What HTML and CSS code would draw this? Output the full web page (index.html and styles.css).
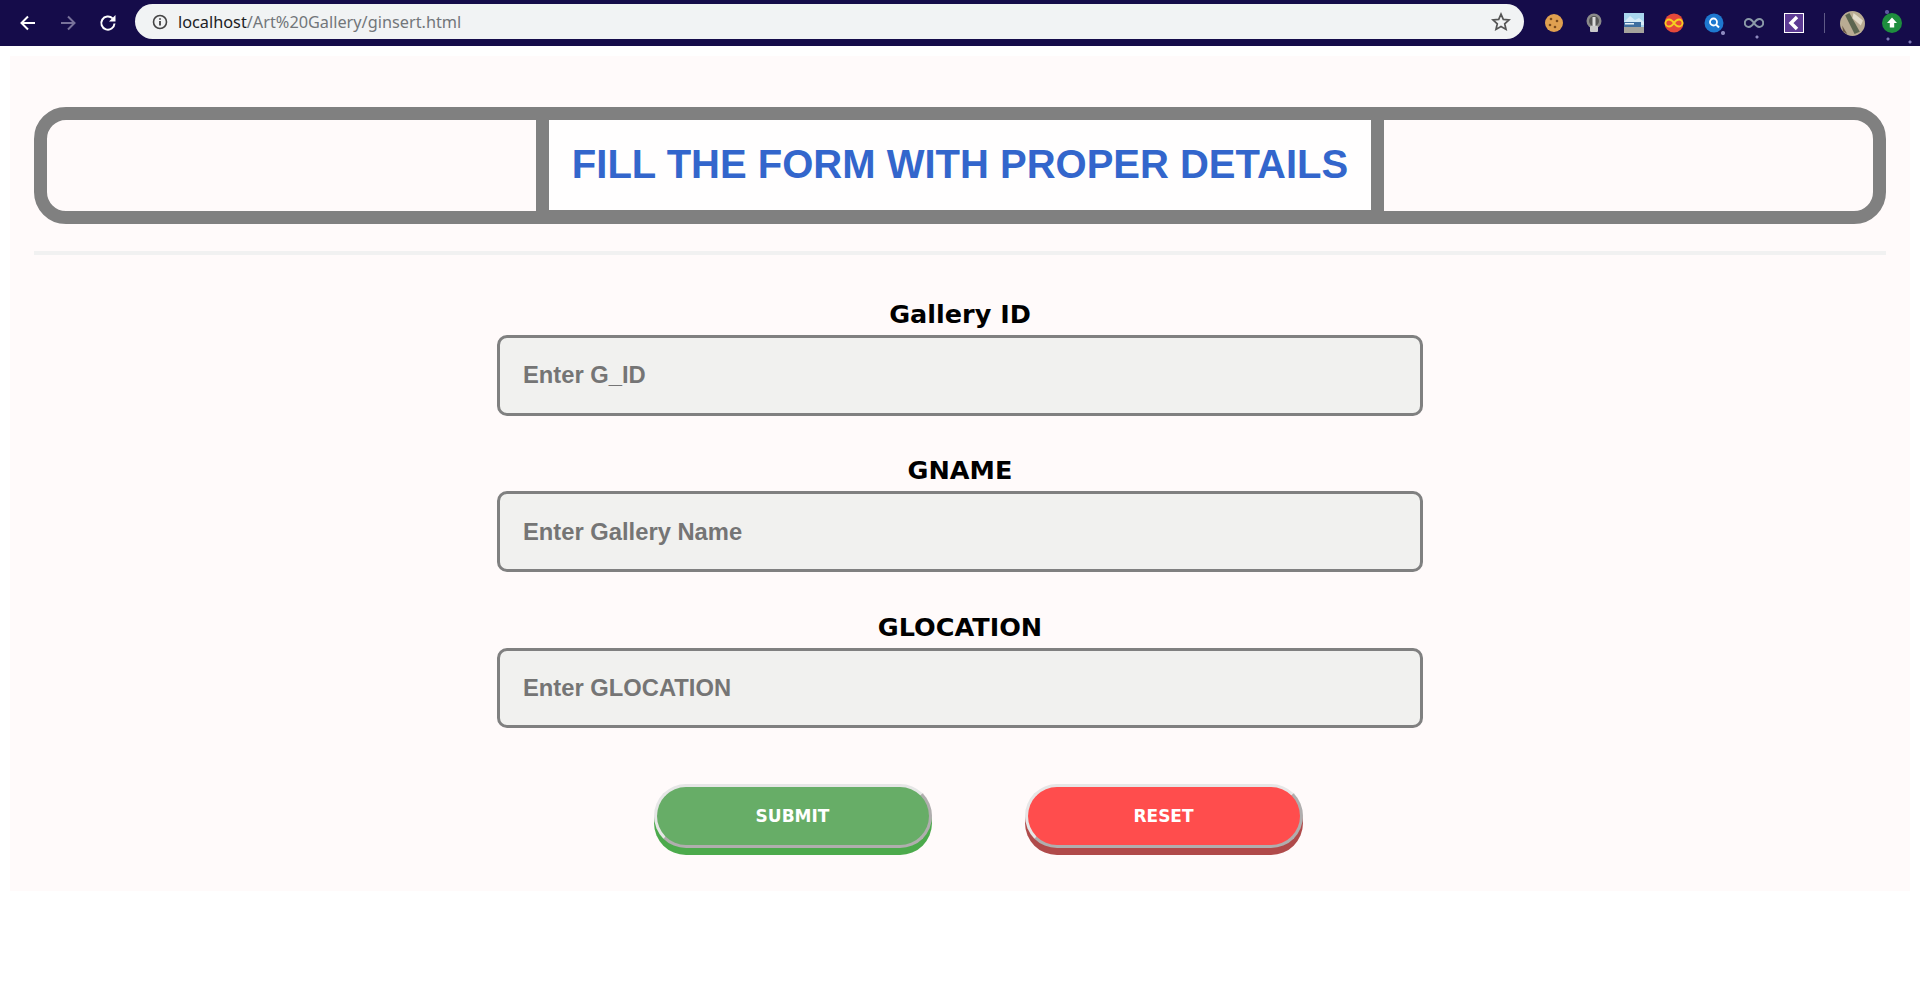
FILE: index.html
```html
<!DOCTYPE html>
<html lang="en">
<head>
    <meta charset="UTF-8">
    <meta name="viewport" content="width=device-width, initial-scale=1.0">
    <title>Art Gallery</title>
    <link rel="stylesheet" href="styles.css">
</head>
<body>
    <header class="toolbar">
        <nav class="nav-buttons">
            <svg class="nav-icon" viewBox="0 0 20 20"><path d="M17 10H4M10 3.500 3.500 10l6.500 6.500" fill="none" stroke="#fff" stroke-width="2"/></svg>
            <svg class="nav-icon" viewBox="0 0 20 20"><path d="M3 10h13M10 3.500l6.500 6.500-6.500 6.500" fill="none" stroke="#78729a" stroke-width="2"/></svg>
            <svg class="nav-icon" viewBox="0 0 20 20"><path d="M16.500 10.500a6.600 6.600 0 1 1-1.900-5.100" fill="none" stroke="#fff" stroke-width="2"/><path d="M17.500 2v6.500H11z" fill="#fff"/></svg>
        </nav>
        <div class="address-bar">
            <svg class="info-icon" viewBox="0 0 16 16"><circle cx="8" cy="8" r="6.500" fill="none" stroke="#444" stroke-width="1.600"/><path d="M8 7v4.500M8 4.200v1.600" stroke="#444" stroke-width="1.800"/></svg>
            <span class="url"><span class="url-host">localhost</span>/Art%20Gallery/ginsert.html</span>
            <svg class="star-icon" viewBox="0 0 20 20"><path d="M10 2.200l2.300 5.200 5.700.6-4.300 3.800 1.300 5.600L10 14.500l-5 2.900 1.300-5.600L2 8l5.700-.6z" fill="none" stroke="#555" stroke-width="1.700"/></svg>
        </div>
        <div class="extensions">
            <svg class="ext" viewBox="0 0 20 20"><circle cx="10" cy="10" r="9" fill="#e0a050"/><circle cx="7" cy="6" r="1.300" fill="#7a4a1c"/><circle cx="13" cy="8" r="1.300" fill="#7a4a1c"/><circle cx="6" cy="12" r="1.300" fill="#7a4a1c"/><circle cx="11" cy="14" r="1.300" fill="#7a4a1c"/></svg>
            <svg class="ext" viewBox="0 0 20 20"><circle cx="10" cy="8" r="7.500" fill="#8a8a8a"/><circle cx="10" cy="8" r="5" fill="#555"/><rect x="8.500" y="4" width="3" height="9" fill="#ddd"/><rect x="6" y="13" width="8" height="6" rx="1" fill="#c9c9c9"/></svg>
            <svg class="ext" viewBox="0 0 20 20"><rect width="20" height="20" fill="#a9d6ee"/><path d="M0 9l6-6 5 4 4-2 5 4v3H0z" fill="#d7ebf6"/><rect y="9" width="17" height="5" fill="#3f6f9f"/><rect x="1" y="10" width="9" height="1.500" fill="#e8f2f8"/><rect y="14" width="20" height="6" fill="#a5a39c"/></svg>
            <svg class="ext" viewBox="0 0 20 20"><circle cx="10" cy="10" r="9.500" fill="#e5493a"/><path d="M10 10C8 7 6.500 6.500 5 6.500a3.500 3.500 0 0 0 0 7c1.500 0 3-.5 5-3.500s3.500-3.500 5-3.500a3.500 3.500 0 0 1 0 7c-1.500 0-3-.5-5-3.500z" fill="none" stroke="#f5d020" stroke-width="1.800"/></svg>
            <svg class="ext" viewBox="0 0 20 20"><circle cx="10" cy="10" r="9.500" fill="#1e78cf"/><circle cx="9.500" cy="9" r="3.500" fill="none" stroke="#fff" stroke-width="1.800"/><path d="M12 11.500l3 3" stroke="#fff" stroke-width="2"/></svg>
            <svg class="ext" viewBox="0 0 20 20"><path d="M10 10C8 7 6.500 6 4.800 6a4 4 0 0 0 0 8c1.700 0 3.200-1 5.200-4s3.500-4 5.200-4a4 4 0 0 1 0 8c-1.700 0-3.200-1-5.200-4z" fill="none" stroke="#8b9aa8" stroke-width="2"/></svg>
            <svg class="ext" viewBox="0 0 20 20"><rect x=".5" y=".5" width="19" height="19" fill="#5d3b94" stroke="#fff"/><path d="M13 4 7 10l6 6" fill="none" stroke="#fff" stroke-width="3.500"/></svg>
            <span class="ext-divider"></span>
            <svg class="avatar" viewBox="0 0 24 24"><circle cx="12" cy="12" r="12" fill="#b9ac93"/><path d="M5 4l9 18 5-2L9 2z" fill="#5c6650"/><path d="M13 2l9 7-2 5-8-7z" fill="#e3dccb"/><path d="M2 14l5 8-4-2z" fill="#6e5a48"/></svg>
            <svg class="update" viewBox="0 0 20 20"><circle cx="10" cy="10" r="10" fill="#1e8e3e"/><path d="M10 4.500l5 5.500h-2.800v4.500H7.800V10H5z" fill="#fff"/></svg>
        </div>
    </header>

    <main class="page">
        <div class="title-box">
            <h1 class="title">FILL THE FORM WITH PROPER DETAILS</h1>
        </div>
        <hr class="divider">

        <form class="gallery-form">
            <label class="field-label" for="gid">Gallery ID</label>
            <input class="field-input" type="text" id="gid" placeholder="Enter G_ID">

            <label class="field-label" for="gname">GNAME</label>
            <input class="field-input" type="text" id="gname" placeholder="Enter Gallery Name">

            <label class="field-label" for="glocation">GLOCATION</label>
            <input class="field-input" type="text" id="glocation" placeholder="Enter GLOCATION">

            <div class="form-buttons">
                <button class="btn btn-submit" type="submit">SUBMIT</button>
                <button class="btn btn-reset" type="reset">RESET</button>
            </div>
        </form>
    </main>
</body>
</html>
```

FILE: styles.css
```css
body {
    margin: 0;
    background-color: #fff;
    font-family: "Liberation Sans", Arial, sans-serif;
}

.toolbar {
    display: flex;
    align-items: center;
    height: 46px;
    background-color: #150c4a;
    background-image:
        radial-gradient(circle at 1723px 33px, #8f8bc0 0, #8f8bc0 1.5px, transparent 2.5px),
        radial-gradient(circle at 1757px 37px, #8f8bc0 0, #8f8bc0 1px, transparent 2px),
        radial-gradient(circle at 1888px 39px, #7d79b5 0, #7d79b5 1px, transparent 2px),
        radial-gradient(circle at 1910px 42px, #7d79b5 0, #7d79b5 1px, transparent 2px),
        radial-gradient(circle at 1887px 12px, #5d58a0 0, #5d58a0 1.5px, transparent 2.5px);
}

.nav-buttons {
    display: flex;
    gap: 20px;
    width: 135px;
    padding-left: 18px;
    box-sizing: border-box;
}

.nav-icon {
    width: 20px;
    height: 20px;
}

.address-bar {
    display: flex;
    align-items: center;
    width: 1389px;
    height: 35px;
    margin-top: -3px;
    padding: 0 13px 0 17px;
    box-sizing: border-box;
    border-radius: 18px;
    background-color: #f1f3f4;
}

.info-icon {
    width: 16px;
    height: 16px;
    margin-right: 10px;
}

.url {
    flex: 1;
    font-family: "Noto Sans", Arial, sans-serif;
    font-size: 16.3px;
    color: #72767a;
}

.url-host {
    color: #202124;
}

.star-icon {
    width: 20px;
    height: 20px;
}

.extensions {
    display: flex;
    align-items: center;
    gap: 20px;
    padding-left: 20px;
}

.ext {
    width: 20px;
    height: 20px;
}

.ext-divider {
    width: 1px;
    height: 20px;
    margin-right: -5px;
    background-color: #5f5a86;
}

.avatar {
    width: 25px;
    height: 25px;
    margin-right: -3px;
}

.update {
    width: 20px;
    height: 20px;
}

.page {
    margin: 10px 10px 0;
    height: 835px;
    padding: 51px 24px 0;
    box-sizing: border-box;
    background-color: #fffafa;
}

.title-box {
    display: flex;
    justify-content: center;
    height: 117px;
    box-sizing: border-box;
    border: 13px solid #808080;
    border-radius: 32px;
}

.title {
    height: 91px;
    margin: 0;
    padding: 0 23px;
    box-sizing: border-box;
    border-left: 13px solid #808080;
    border-right: 13px solid #808080;
    border-bottom: 1px solid #808080;
    background-color: #fffefe;
    font-size: 40px;
    line-height: 88px;
    color: #3366cc;
    white-space: nowrap;
}

.divider {
    height: 4px;
    margin: 27px 0 0;
    border: none;
    background-color: #f1f1f1;
}

.gallery-form {
    display: flex;
    flex-direction: column;
    align-items: center;
    padding-top: 45px;
}

.field-label {
    font-family: "DejaVu Sans", Verdana, sans-serif;
    font-size: 25.5px;
    font-weight: bold;
    line-height: 29px;
    margin-bottom: 6px;
    color: #000;
}

.field-input {
    width: 926px;
    height: 80.5px;
    margin-bottom: 40.75px;
    padding: 0 23px;
    box-sizing: border-box;
    border: 3px solid #808080;
    border-radius: 10px;
    background-color: #f1f1ef;
    font-family: "Liberation Sans", Arial, sans-serif;
    font-size: 23.75px;
    font-weight: bold;
}

.field-input::placeholder {
    color: #757575;
    opacity: 1;
}

.form-buttons {
    display: flex;
    gap: 93px;
    margin-top: 15px;
    margin-left: 36px;
}

.btn {
    width: 278px;
    height: 64px;
    border: 3px solid;
    border-color: #e6e6e6 #b0aeae #b0aeae #e6e6e6;
    border-radius: 32px;
    font-family: "DejaVu Sans", Verdana, sans-serif;
    font-size: 17px;
    font-weight: bold;
    color: #fff;
}

.btn-submit {
    background-color: #67ad67;
    box-shadow: 0 7px 0 #4caa4c;
}

.btn-reset {
    background-color: #ff4d4d;
    box-shadow: 0 7px 0 #b04a4a;
}
```
